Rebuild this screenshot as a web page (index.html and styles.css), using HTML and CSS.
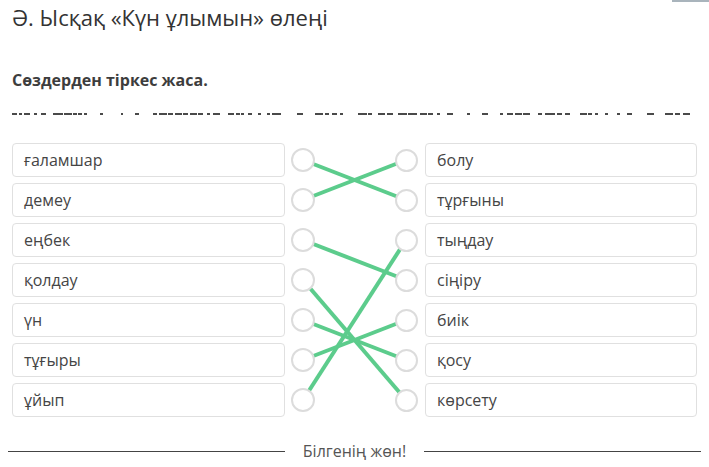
FILE: index.html
```html
<!DOCTYPE html>
<html lang="kk">
<head>
<meta charset="utf-8">
<title>Ә. Ысқақ «Күн ұлымын» өлеңі</title>
<link rel="stylesheet" href="styles.css">
</head>
<body>
<div class="topbar"><span class="topbar-btn"></span></div>
<h1 class="title">Ә. Ысқақ «Күн ұлымын» өлеңі</h1>
<h2 class="task">Сөздерден тіркес жаса.</h2>
<svg class="dashes" viewBox="12 0 685 4" width="685" height="4" aria-hidden="true">
  <g fill="#4a4a4a">
    <rect x="12" y="1" width="5" height="2"/><rect x="19" y="1" width="3" height="2"/><rect x="24" y="1" width="6" height="2"/><rect x="34" y="1" width="3" height="2"/><rect x="41" y="1" width="5" height="2"/><rect x="53" y="1" width="10" height="2"/><rect x="64" y="1" width="8" height="2"/><rect x="73" y="1" width="4" height="2"/><rect x="78" y="1" width="4" height="2"/><rect x="84" y="1" width="3" height="2"/><rect x="100" y="1" width="3" height="2"/><rect x="121" y="1" width="2" height="2"/><rect x="135" y="1" width="4" height="2"/><rect x="153" y="1" width="4" height="2"/><rect x="159" y="1" width="8" height="2"/><rect x="168" y="1" width="5" height="2"/><rect x="175" y="1" width="7" height="2"/><rect x="183" y="1" width="5" height="2"/><rect x="190" y="1" width="7" height="2"/><rect x="198" y="1" width="5" height="2"/><rect x="207" y="1" width="3" height="2"/><rect x="213" y="1" width="7" height="2"/><rect x="228" y="1" width="6" height="2"/><rect x="236" y="1" width="4" height="2"/><rect x="241" y="1" width="3" height="2"/><rect x="248" y="1" width="4" height="2"/><rect x="258" y="1" width="3" height="2"/><rect x="267" y="1" width="3" height="2"/><rect x="272" y="1" width="9" height="2"/><rect x="297" y="1" width="6" height="2"/><rect x="315" y="1" width="8" height="2"/><rect x="325" y="1" width="4" height="2"/><rect x="332" y="1" width="5" height="2"/><rect x="340" y="1" width="3" height="2"/><rect x="358" y="1" width="9" height="2"/><rect x="368" y="1" width="4" height="2"/><rect x="378" y="1" width="7" height="2"/><rect x="387" y="1" width="6" height="2"/><rect x="398" y="1" width="9" height="2"/><rect x="408" y="1" width="9" height="2"/><rect x="420" y="1" width="7" height="2"/><rect x="428" y="1" width="5" height="2"/><rect x="437" y="1" width="3" height="2"/><rect x="447" y="1" width="6" height="2"/><rect x="467" y="1" width="3" height="2"/><rect x="482" y="1" width="6" height="2"/><rect x="500" y="1" width="3" height="2"/><rect x="507" y="1" width="6" height="2"/><rect x="515" y="1" width="7" height="2"/><rect x="523" y="1" width="7" height="2"/><rect x="538" y="1" width="4" height="2"/><rect x="545" y="1" width="10" height="2"/><rect x="557" y="1" width="5" height="2"/><rect x="565" y="1" width="5" height="2"/><rect x="580" y="1" width="7" height="2"/><rect x="588" y="1" width="4" height="2"/><rect x="595" y="1" width="3" height="2"/><rect x="605" y="1" width="3" height="2"/><rect x="617" y="1" width="3" height="2"/><rect x="627" y="1" width="5" height="2"/><rect x="647" y="1" width="7" height="2"/><rect x="665" y="1" width="8" height="2"/><rect x="675" y="1" width="5" height="2"/><rect x="683" y="1" width="7" height="2"/>
  </g>
</svg>

<div class="match">
  <svg class="links" width="685" height="274" viewBox="0 0 685 274" aria-hidden="true">
    <g stroke="#5ccc8c" stroke-width="4" stroke-linecap="butt">
      <line x1="291" y1="17" x2="394" y2="57"/>
      <line x1="291" y1="57" x2="394" y2="17"/>
      <line x1="291" y1="97" x2="394" y2="137"/>
      <line x1="394" y1="97" x2="291" y2="257"/>
      <line x1="291" y1="137" x2="394" y2="257"/>
      <line x1="291" y1="177" x2="394" y2="217"/>
      <line x1="291" y1="217" x2="394" y2="177"/>
    </g>
  </svg>

  <div class="box left">ғаламшар</div><span class="dot dl"></span><span class="dot dr"></span><div class="box right">болу</div>
  <div class="box left">демеу</div><span class="dot dl"></span><span class="dot dr"></span><div class="box right">тұрғыны</div>
  <div class="box left">еңбек</div><span class="dot dl"></span><span class="dot dr"></span><div class="box right">тыңдау</div>
  <div class="box left">қолдау</div><span class="dot dl"></span><span class="dot dr"></span><div class="box right">сіңіру</div>
  <div class="box left">үн</div><span class="dot dl"></span><span class="dot dr"></span><div class="box right">биік</div>
  <div class="box left">тұғыры</div><span class="dot dl"></span><span class="dot dr"></span><div class="box right">қосу</div>
  <div class="box left">ұйып</div><span class="dot dl"></span><span class="dot dr"></span><div class="box right">көрсету</div>
</div>

<div class="divider"><span class="rule"></span><span class="divider-text">Білгенің жөн!</span><span class="rule"></span></div>
</body>
</html>
```

FILE: styles.css
```css
html, body {
  margin: 0;
  padding: 0;
  background: #ffffff;
}
body {
  padding: 0 12px;
  font-family: "Open Sans", "Noto Sans", sans-serif;
  color: #444;
  overflow: hidden;
}
.topbar {
  display: flex;
  justify-content: flex-end;
  height: 2px;
  margin-right: -12px;
}
.topbar-btn {
  width: 37px;
  height: 2px;
  background: #a9b4bc;
}
.title {
  margin: 0;
  font-size: 22px;
  line-height: 30px;
  font-weight: 400;
  color: #333;
}
.task {
  margin: 37px 0 0;
  font-size: 16px;
  line-height: 22px;
  font-weight: 700;
  color: #3d3d3d;
}
.dashes {
  display: block;
  margin-top: 21px;
}
.match {
  position: relative;
  margin-top: 27px;
  display: grid;
  grid-template-columns: 279px 24px 79px 24px 279px;
  grid-auto-rows: 34px;
  row-gap: 6px;
  align-items: center;
}
.links {
  position: absolute;
  left: 0;
  top: 0;
  z-index: 0;
}
.box {
  box-sizing: border-box;
  height: 34px;
  border: 1px solid #e0e0e0;
  border-radius: 4px;
  padding: 0 11px;
  font-size: 16px;
  line-height: 32px;
  color: #454545;
  background: #fff;
}
.box.left {
  grid-column: 1;
  width: 273px;
  justify-self: start;
}
.box.right {
  grid-column: 5;
  width: 272px;
  justify-self: end;
}
.dot {
  position: relative;
  z-index: 1;
  box-sizing: border-box;
  width: 24px;
  height: 24px;
  border: 2px solid #dcdcdc;
  border-radius: 50%;
  background: #fff;
}
.dot.dl { grid-column: 2; }
.dot.dr { grid-column: 4; width: 23px; height: 23px; justify-self: center; }
.divider {
  display: flex;
  align-items: center;
  margin: 24px -4px 0;
  height: 20px;
}
.rule {
  flex: 1;
  height: 1px;
  background: #444;
}
.divider-text {
  padding: 0 18px;
  font-size: 16px;
  color: #555;
}
```
